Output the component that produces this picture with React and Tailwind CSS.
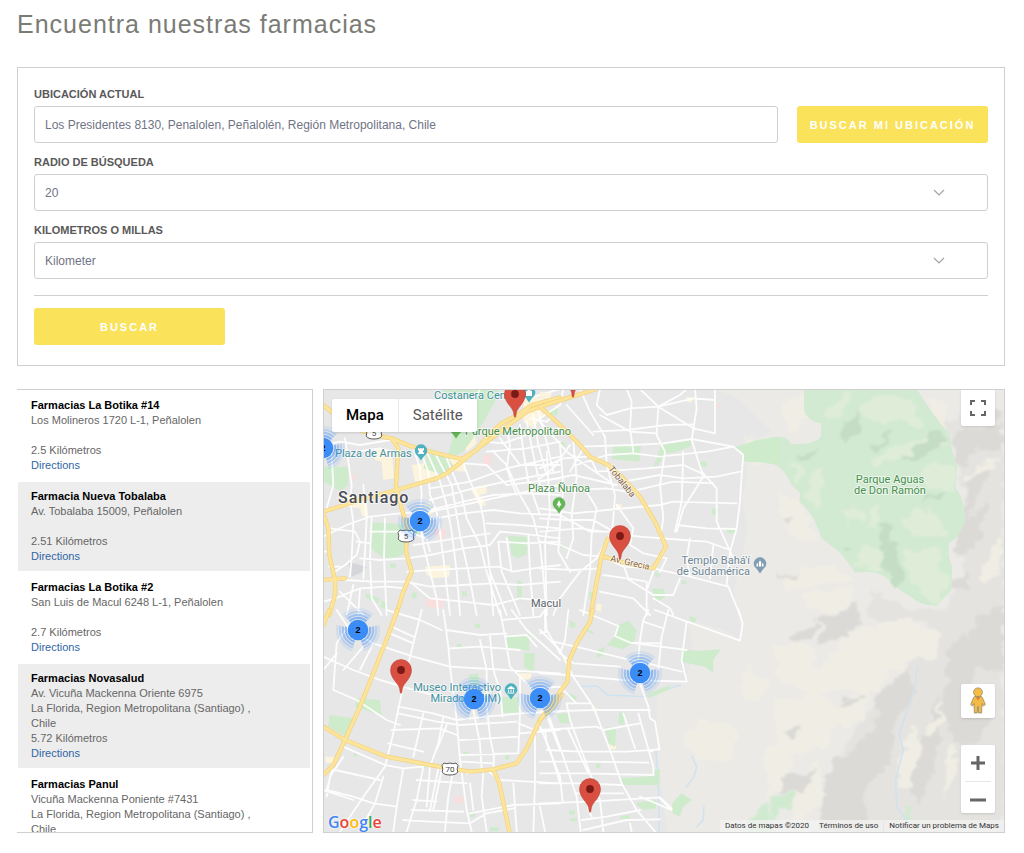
import React, { useState } from "react";

const stores = [
  {
    name: "Farmacias La Botika #14",
    address: "Los Molineros 1720 L-1, Peñalolen",
    region: "",
    distance: "2.5 Kilómetros",
  },
  {
    name: "Farmacia Nueva Tobalaba",
    address: "Av. Tobalaba 15009, Peñalolen",
    region: "",
    distance: "2.51 Kilómetros",
  },
  {
    name: "Farmacias La Botika #2",
    address: "San Luis de Macul 6248 L-1, Peñalolen",
    region: "",
    distance: "2.7 Kilómetros",
  },
  {
    name: "Farmacias Novasalud",
    address: "Av. Vicuña Mackenna Oriente 6975",
    region: "La Florida, Region Metropolitana (Santiago) , Chile",
    distance: "5.72 Kilómetros",
  },
  {
    name: "Farmacias Panul",
    address: "Vicuña Mackenna Poniente #7431",
    region: "La Florida, Region Metropolitana (Santiago) , Chile",
    distance: "6.1 Kilómetros",
  },
];

// Base map, split in tiles. Each tile has its own origin, in thirds of a pixel.
const tiles = [
  {
    x: -12,
    y: -15,
    green: [
      "M360 0L540 0L530 40L480 130L430 200L380 225L395 170L410 90Z",
      "M10 245L85 245L85 300L60 318L10 290Z",
      "M152 412L253 418L252 505L235 515L192 520L152 490Z",
      "M565 453L623 455L620 508L592 520L575 510Z",
      "M255 430L300 432L300 450L260 455Z",
      "M135 625L180 640L175 655L140 640Z",
      "M185 648L205 655L195 672L180 665Z",
      "M210 535L228 537L226 550L210 548Z",
      "M425 620L440 618L440 634L428 632Z",
      "M275 624L290 622L290 640L276 640Z",
      "M320 210L370 205L400 240L370 270L310 250Z",
      "M590 585L605 590L605 650L592 640Z",
    ],
    sand: [
      "M275 240L340 230L350 280L285 290Z",
      "M165 190L215 195L222 280L190 285L185 230L165 225Z",
      "M450 310L500 300L500 325L480 330L500 360L480 365Z",
      "M75 330L140 340L145 400L125 390L120 370L80 365Z",
      "M315 545L390 540L388 575L340 580L320 570Z",
      "M350 215L430 215L440 260L370 255Z",
      "M610 30L670 40L670 90L640 130L610 110Z",
      "M410 120L460 130L470 175L440 200Z",
      "M270 370L330 350L345 380L310 395Z",
    ],
    rose: ["M490 215L515 205L510 245L490 240Z", "M340 430L378 432L372 460L345 452Z", "M318 640L370 640L365 670L320 665Z", "M90 270L105 270L105 284L92 282Z"],
    roads: [
      "M10 455L80 420L150 395L240 385L330 380L430 360L520 340L720 300",
      "M75 160L95 300L90 345L100 410L95 520L90 575",
      "M110 200L180 190L215 200",
      "M130 300L140 400L135 500L130 580",
      "M155 395L150 520L155 640L185 690",
      "M195 400L192 520L200 690",
      "M280 190L300 250L305 330L300 400L310 480L330 560L350 640L355 690",
      "M300 195L325 260L330 330L350 380L360 440L375 560L390 690",
      "M320 200L360 290L380 360L395 440L410 560L420 690",
      "M345 205L395 300L405 360L420 450L445 560L470 690",
      "M380 220L425 330L440 400L480 480L500 560L540 690",
      "M430 235L450 290L480 350L490 400L500 480L510 560L560 690",
      "M330 310L450 290L560 250L720 215",
      "M330 345L460 310L580 285L720 260",
      "M310 380L430 350L520 330L620 325L720 330",
      "M320 405L430 385L520 375L600 385L720 390",
      "M260 520L330 510L430 490L510 480L540 440L600 445L720 460",
      "M120 520L180 525L260 520",
      "M262 560L340 555L430 550L535 545L580 560L640 550L720 540",
      "M280 480L350 470L440 455L510 445",
      "M75 585L160 590L255 590L330 605L430 600L520 595L600 600L720 590",
      "M45 640L120 610L200 605L255 610",
      "M45 560L75 540L110 510L120 470L105 440L30 430",
      "M60 620L130 690M100 600L80 690M120 610L115 690",
      "M10 180L60 170L120 180L210 165M35 210L40 300L20 370",
      "M270 590L330 640L430 650L520 660L600 640L720 650",
      "M520 200L560 240L600 330L640 400L660 480L670 570L680 690",
      "M490 170L550 175L620 150L720 130M500 200L620 190L720 170",
      "M600 120L610 200L625 290L660 390M620 110L640 210L660 300",
      "M640 90L655 180L680 270M655 80L680 170L700 260M630 100L680 110L700 90",
      "M560 130L570 180L560 250L590 330M540 160L600 240L720 240",
      "M510 560L520 690M535 470L545 560L600 690M560 460L575 560M625 450L630 560L640 690",
      "M540 470L620 475L720 470M500 415L600 420L720 430",
      "M430 235L500 240L560 300L720 280",
      "M150 440L250 440M110 470L150 475M262 440L320 460L330 500",
      "M10 500L28 500M28 545L60 545M10 650L45 640",
      "M480 12L460 50M560 12L590 50L660 30L720 12",
    ],
    highways: [
      "M10 60L40 85L120 135L160 150L215 160L270 183L350 205L425 222L470 195L505 150L545 115L600 85L635 60L720 38",
      "M10 380L120 345L230 315L350 280L380 265L425 230L480 185L540 140L620 80L660 65",
      "M215 160L235 190L228 300L245 370L262 430L258 500L275 560L250 620L228 690",
      "M10 385L25 430L28 510L45 585L45 630L28 690",
      "M10 585L75 580",
    ],
    shade: ["M85 530L140 545L130 560L95 575Z"],
  },
  {
    x: 648,
    y: -15,
    green: [
      "M220 182L303 180L298 230L215 222Z",
      "M365 180L455 165L452 185L400 203L375 205L355 240L340 245Z",
      "M480 230L500 230L500 245L482 243Z",
      "M580 188L650 165L720 155L720 240L660 232L615 230L605 200Z",
      "M30 75L55 70L50 92L25 90Z",
      "M515 370L532 372L528 392L515 388Z",
      "M557 432L590 430L585 445L565 445Z",
      "M60 480L78 482L76 490L60 488Z",
      "M335 610L370 612L378 632L350 655Z",
      "M148 620L160 622L156 645L148 640Z",
      "M425 587L440 588L438 598L425 598Z",
      "M62 172L76 172L76 186L64 184Z",
      "M345 562L362 566L360 576L345 574Z",
    ],
    sand: ["M0 20L35 25L30 40L0 40Z", "M438 35L460 38L455 52L440 50Z", "M228 358L245 358L243 374L228 374Z", "M170 655L185 658L182 680L168 675Z"],
    rose: ["M530 55L543 57L540 67L530 65Z"],
    roads: [
      "M120 12L150 80L195 155L200 240L225 330L220 400L215 440L170 520L120 560L60 640L40 690",
      "M180 12L170 60L200 90L270 70L355 65L460 40L525 45",
      "M260 12L275 50L270 130L280 200",
      "M300 12L355 65L420 30L440 12M355 65L350 150L375 200L360 300L370 400L360 460",
      "M355 65L460 130L525 145L525 12M465 12L470 70L455 165L485 260L530 310L530 410L580 520",
      "M120 185L280 180L370 175L455 162L580 185L610 210L605 270L600 350L590 430L570 500L560 600",
      "M160 140L260 135L380 120L460 118",
      "M110 240L200 210L280 205L360 215L500 200L580 185",
      "M150 215L170 260L320 250L430 240L485 265L490 275",
      "M250 290L360 270L430 280L530 275L600 260M270 320L400 290L520 295",
      "M0 370L100 385L200 375L360 360L400 350L590 355",
      "M0 250L70 220L140 215M0 290L100 270L230 300M0 320L200 310L290 325",
      "M430 200L425 350L405 440M490 275L430 370L410 440",
      "M410 420L500 430L590 432M220 445L300 455L430 465L500 470L570 495",
      "M20 200L30 380L15 470L20 690M60 180L70 300L60 420L55 500L90 560",
      "M100 170L110 280L95 390L100 460L80 520M0 400L80 405L160 405L220 440",
      "M0 470L60 480L130 510L190 515M0 440L120 430L190 440M0 550L100 555L180 550",
      "M60 390L150 440L210 440M140 320L170 370L155 450L150 560L130 690",
      "M0 110L80 200L150 250L210 290M90 180L40 250L0 280M130 190L90 260",
      "M230 360L280 430L270 480L310 505L380 520L360 560",
      "M190 515L250 545L340 550L450 575L565 605L600 690",
      "M250 540L265 580L320 590L320 690M380 490L340 560L322 610",
      "M190 570L260 580L340 630L400 630L420 580M180 620L280 640L330 690M340 640L390 670L400 690",
      "M450 460L440 520L450 575M520 480L510 580",
      "M70 12L60 60L0 100M80 60L160 150M180 90L270 140L350 145",
    ],
    highways: [
      "M0 65L80 40L170 12",
      "M0 65L60 120L120 180L150 215L205 240L245 275L300 335L345 410L378 485L340 550L260 535L190 515",
      "M152 690L185 510L203 462",
    ],
    shade: [],
  },
  {
    x: -12,
    y: 660,
    green: [
      "M28 315L100 325L90 355L75 378L25 350Z",
      "M110 265L180 270L185 318L150 305L105 290Z",
      "M560 78L628 72L628 122L562 115Z",
      "M612 128L645 130L640 185L612 172Z",
      "M548 260L595 262L595 308L548 308Z",
      "M410 102L426 102L424 115L408 113Z",
      "M465 40L482 42L480 54L464 52Z",
      "M445 195L475 190L480 240L455 235Z",
      "M450 605L466 605L464 622L450 620Z",
      "M510 652L538 652L535 664L510 664Z",
      "M430 425L445 425L443 438L430 436Z",
      "M555 435L568 437L566 450L555 448Z",
      "M300 462L318 464L316 475L300 472Z",
      "M100 430L112 432L110 440L100 440Z",
    ],
    sand: ["M595 190L635 190L630 210L600 205Z", "M15 440L42 440L40 460L18 458Z"],
    rose: ["M405 558L428 558L428 580L405 578Z"],
    roads: [
      "M305 0L270 140L245 250L220 370L195 470L130 560L60 665",
      "M370 0L385 110L390 170L410 330L420 450L440 600L455 665",
      "M10 140L100 180L180 210L300 245L400 270",
      "M50 0L90 60L160 100L280 140L390 170L560 180L720 190",
      "M200 0L300 30L365 60M380 60L480 75L560 70",
      "M90 40L50 100L40 240L110 270L200 330L240 345",
      "M210 70L280 100M215 50L280 80M10 180L50 130",
      "M130 110L70 180M160 100L120 180",
      "M235 290L340 310L410 330L500 320L600 310L720 305",
      "M235 310L350 335L420 345L590 335",
      "M215 360L360 355L410 375M205 400L310 425",
      "M310 310L280 440M370 320L355 400L330 470L320 590M380 345L350 420",
      "M460 300L480 400L485 480M500 290L510 380L522 440L520 480",
      "M540 0L555 80L570 170L600 200L660 260L700 370L720 420",
      "M545 30L660 20M555 80L620 75L650 110M575 0L620 60L720 150",
      "M675 0L680 60L720 130M390 115L480 110L600 120",
      "M480 90L500 180L500 290M510 80L520 180L540 240L548 320",
      "M600 200L600 310L595 430M595 340L645 360L645 520L640 665",
      "M420 390L595 380M420 435L590 430M425 455L520 460",
      "M600 370L720 360M660 350L690 420L720 520",
      "M40 465L20 540L100 560L160 580L230 590M70 440L30 500L20 560",
      "M70 410L195 465L250 475L310 470M45 480L180 510",
      "M250 475L230 590L220 665M310 470L290 570L260 665",
      "M355 475L330 600M365 480L340 600M190 500L165 580L120 660",
      "M290 510L440 520M280 570L350 575M275 600L430 605",
      "M400 480L385 560L375 665M250 630L330 635L450 640",
      "M440 490L500 480L540 510L720 520M450 520L460 600M490 490L485 560L500 665",
      "M450 610L580 585L720 580M450 640L500 610L580 595",
      "M580 520L590 665M10 540L100 570",
    ],
    highways: [
      "M232 0L205 75L160 190L120 290L75 390L40 465L10 495",
      "M10 350L75 390L200 440L330 465L450 485L520 478L590 460L620 415L660 330L700 290L725 255",
      "M520 478L538 520L568 665",
      "M10 45L28 0",
    ],
    shade: [],
  },
  {
    x: 648,
    y: 660,
    green: [
      "M235 45L265 32L290 60L282 95L248 118L200 105L225 80Z",
      "M425 120L490 122L543 118L520 150L520 188L495 170L425 155Z",
      "M50 312L90 310L92 340L60 340Z",
      "M195 350L228 355L225 410L205 400Z",
      "M238 305L258 310L250 345L235 340Z",
      "M240 505L345 498L345 480L360 478L358 525L250 525Z",
      "M285 580L350 570L348 595L310 600Z",
      "M395 590L400 575L425 550L455 570L430 590L420 620L398 610Z",
      "M85 248L110 260L108 272L90 265Z",
      "M325 250L390 225L385 240L325 265Z",
      "M450 18L470 25L465 38L448 32Z",
      "M168 460L182 460L180 474L168 474Z",
      "M86 602L104 600L104 614L88 614ZM90 624L112 624L110 634L90 632Z",
      "M240 618L270 615L268 626L242 626Z",
      "M90 30L108 42L100 56L88 50Z",
      "M172 120L195 110L190 135L170 145Z",
      "M140 56L162 66L158 72L140 64Z",
    ],
    sand: ["M208 402L228 405L228 418L210 418Z", "M155 290L170 295L168 304L156 304Z"],
    rose: [],
    roads: [
      "M120 0L235 48L225 78L270 98L440 120M325 0L310 30L300 90L295 150L300 220L325 290L330 325L345 335L358 415L330 425",
      "M0 60L60 120L100 200L160 290L210 420L245 520L290 600L345 665",
      "M0 190L80 195L250 210L440 215L425 150L440 35",
      "M345 0L600 92L608 40L595 0M440 35L345 0",
      "M385 0L365 80L355 180M310 35L370 55M270 98L360 100",
      "M40 95L130 115L250 145L300 155L425 185M60 130L100 160L240 170",
      "M20 300L70 440L110 560L122 665M80 280L90 330L150 490L180 570L190 665",
      "M0 305L160 300L330 300M80 280L150 280M60 230L110 280",
      "M0 360L170 350L190 360L300 340M20 420L120 425L260 425L360 418",
      "M0 455L150 455L325 458M0 490L130 490L340 495L340 470L320 400L295 310",
      "M0 520L120 520L245 525M0 580L150 575L360 562L395 595M110 550L250 550",
      "M125 630L200 620L300 600M130 660L260 630L360 628M250 310L285 415",
      "M300 560L395 600L360 565M15 360L20 400L60 500L68 575M85 360L145 490",
      "M0 20L15 0M15 0L15 60M85 0L75 90L60 130M270 640L275 665M0 590L15 665",
      "M140 530L145 600L155 620M20 65L0 70M0 235L60 230",
    ],
    highways: ["M0 330L30 290L60 245L82 215L88 150L110 100L150 35L158 0"],
    shade: [],
  },
];

const hills = {
  base: "M1180 0L1240 25L1340 120L1320 140L1260 160L1268 250L1255 330L1270 420L1250 520L1230 600L1245 690L1258 755L1200 720L1090 690L1110 790L1080 880L1000 905L1000 1100L1030 1326L2040 1326L2040 0Z",
  cream: [
    "M1380 30L1450 15L1460 90L1400 120L1370 70Z",
    "M1800 20L1870 40L1850 150L1810 60Z",
    "M1360 300L1430 340L1470 420L1490 460L1410 450L1370 380Z",
    "M1390 550L1500 520L1590 570L1470 590L1390 600Z",
    "M1440 610L1590 590L1590 640L1510 670L1450 650Z",
    "M1560 740L1720 680L1850 730L1840 790L1760 820L1690 850L1660 900L1620 910L1490 890L1490 840Z",
    "M1340 770L1450 760L1480 830L1570 880L1480 920L1380 880Z",
    "M1350 930L1480 910L1540 960L1520 1060L1440 1100L1360 1080Z",
    "M1500 960L1630 900L1630 980L1560 1010Z",
    "M1330 1070L1400 1090L1400 1170L1330 1220Z",
    "M1760 1010L1790 1080L1770 1180L1720 1200L1730 1100Z",
    "M1820 960L1870 930L1860 1000L1800 1060Z",
    "M1930 260L2010 200L2020 230L1950 290Z",
    "M1960 560L2030 440L2030 530L1980 590Z",
    "M1150 990L1240 1010L1230 1110L1130 1120L1070 1040Z",
    "M1270 830L1330 880L1310 940L1250 910Z",
    "M1900 420L1960 360L1970 380L1900 460Z",
    "M1870 1120L1890 1060L1900 1150L1860 1230Z",
    "M1400 1180L1490 1110L1490 1240L1410 1300Z",
    "M1270 130L1330 170L1320 230L1285 210Z",
  ],
  grey: [
    "M1500 690L1600 640L1610 700L1560 740L1480 760Z",
    "M1890 130L2040 100L2040 170L1960 170L1920 230L1880 190Z",
    "M1930 270L2000 240L1970 320L1910 400Z",
    "M1900 400L1990 340L1980 410L1940 490L1900 500Z",
    "M1860 780L1920 740L1960 820L1940 900L2000 980L1970 1060L1890 1050L1850 960L1870 880Z",
    "M1650 920L1760 830L1770 920L1710 1010L1700 1110L1640 1130L1630 1040L1660 990Z",
    "M1540 1110L1620 1040L1680 1130L1620 1200L1640 1326L1490 1326L1500 1170Z",
    "M1790 1040L1850 1010L1830 1120L1790 1240L1760 1190L1790 1110Z",
    "M1380 1160L1480 1140L1440 1210L1380 1200Z",
    "M1370 390L1410 380L1390 410Z",
    "M1360 560L1430 545L1410 570Z",
    "M1400 740L1490 690L1460 740L1410 760Z",
    "M1530 940L1620 920L1580 950Z",
    "M1960 680L2040 650L2040 840L1960 830L1930 760Z",
    "M1380 1030L1440 1010L1410 1050Z",
    "M1880 580L1940 540L1930 600Z",
    "M1950 30L2030 60L2030 90L1960 80Z",
    "M1830 940L1850 900L1840 970L1810 1010Z",
  ],
  midtone: "M1640 600L1760 660L1860 660L1920 540L1930 400L1900 200L1860 100L2040 60L2040 1326L1480 1326L1560 1060L1700 880L1860 740L1800 690L1640 690Z",
  park: "M1440 0L1440 60Q1450 95 1492 100L1490 140Q1470 165 1400 162Q1390 130 1330 145L1340 220Q1380 230 1402 285L1428 308L1426 335Q1470 370 1493 445L1550 490L1595 548Q1650 540 1685 560Q1720 600 1760 620Q1790 648 1838 647L1882 600L1885 530Q1870 500 1875 460Q1910 440 1923 390Q1920 320 1895 295L1900 230Q1880 180 1878 135Q1830 80 1780 0Z",
  parkLight: [
    "M1610 70L1650 20L1770 30L1800 110L1720 90L1660 100Z",
    "M1640 210L1720 170L1850 120L1870 160L1700 210L1650 230Z",
    "M1790 240L1895 220L1890 300L1810 290Z",
    "M1720 400L1790 360L1850 390L1870 440L1780 440Z",
    "M1740 480L1860 480L1840 530L1880 580L1840 640L1780 600L1740 530Z",
    "M1610 460L1670 480L1680 545L1595 530Z",
    "M1640 350L1670 340L1660 410L1630 400Z",
    "M1400 220L1440 240L1420 290Z",
    "M1470 240L1500 230L1480 360L1450 330Z",
    "M1550 360L1600 340L1610 390L1580 400Z",
    "M1560 20L1590 15L1540 90L1500 70Z",
  ],
  parkDark: [
    "M1560 90L1610 60L1600 140L1560 165L1545 120Z",
    "M1420 195L1480 185L1475 200L1430 215Z",
    "M1730 220L1820 130L1850 120L1870 150L1800 200Z",
    "M1790 325L1870 305L1860 320L1810 335Z",
    "M1670 400L1690 390L1700 450L1740 560L1720 590L1680 530Z",
    "M1550 470L1580 465L1570 480Z",
    "M1640 170L1690 130L1700 145L1650 190Z",
  ],
  smallGreen: [
    "M1338 1220L1410 1200L1400 1260L1338 1290Z",
    "M1280 1290L1330 1230L1340 1326L1270 1320Z",
    "M1745 1260L1760 1250L1770 1300L1750 1300Z",
  ],
  rivers: [
    "M1780 830L1775 880L1755 950L1725 1030L1738 1080L1715 1170L1718 1250L1755 1300",
    "M1104 1098L1118 1130L1110 1160L1086 1192",
    "M996 1080L1004 1200L1006 1326M1140 1250L1138 1290L1118 1310",
    "M770 890L820 888L850 915L960 920L1070 885",
  ],
};

const pins = [
  [191, 4],
  [249, -16],
  [296, 146],
  [77, 280],
  [266, 399],
];

const clusters = [
  [-1, 58],
  [96, 131],
  [34, 240],
  [150, 309],
  [216, 308],
  [316, 283],
];

const Pin = ({ x, y }) => (
  <g transform={`translate(${x} ${y})`}>
    <path
      d="M0 23.5C-.8 23.5-1 21-1.4 18.5C-2.6 13-10.5 8.5-10.5 0A10.5 10.5 0 0 1 10.5 0C10.5 8.5 2.6 13 1.4 18.5C1 21 .8 23.5 0 23.5Z"
      fill="#d94f41"
      stroke="#b93a2d"
      strokeWidth=".5"
    />
    <circle r="3.9" fill="#7b1a14" />
  </g>
);

const Cluster = ({ x, y }) => (
  <g transform={`translate(${x} ${y})`}>
    <g fill="none" stroke="#4a95f7" strokeWidth="2.2" strokeDasharray="88 32" strokeDashoffset="14">
      <circle r="12.2" pathLength="360" opacity=".6" />
      <circle r="15.2" pathLength="360" opacity=".45" />
      <circle r="18.2" pathLength="360" opacity=".28" />
      <circle r="21" pathLength="360" opacity=".12" />
    </g>
    <circle r="10.3" fill="#3a8cf7" />
    <text y="3" textAnchor="middle" fontSize="9" fontWeight="700" fill="#000" className="font-['Liberation_Sans',sans-serif]">
      2
    </text>
  </g>
);

const Poi = ({ x, y, color, children }) => (
  <g transform={`translate(${x} ${y})`}>
    <path d="M0 9.5L-3 5.2A6.3 6.3 0 1 1 3 5.2Z" fill={color} />
    <g fill="#fff">{children}</g>
  </g>
);

const Shield = ({ x, y, label }) => (
  <g transform={`translate(${x} ${y})`}>
    <path
      d="M-6 -6Q-3 -4.500 0 -6Q3 -4.500 6 -6L8 -3.500Q6.500 0 7.800 3Q6 6 0 6Q-6 6 -7.800 3Q-6.500 0 -8 -3.500Z"
      fill="#fff"
      stroke="#4d4d4d"
      strokeWidth=".9"
    />
    <text y="2.800" textAnchor="middle" fontSize="8" fill="#444">
      {label}
    </text>
  </g>
);

const StoreMap = () => (
  <svg
    className="block h-full w-full font-[Roboto,sans-serif]"
    viewBox="0 0 680 442"
    preserveAspectRatio="xMidYMid slice"
    role="img"
    aria-label="Mapa de farmacias"
  >
    <rect width="680" height="442" fill="#e7e7e7" />
    <g transform="scale(.33333)" strokeLinejoin="round" strokeLinecap="round">
      <filter id="soft" x="-5%" y="-5%" width="110%" height="110%">
        <feTurbulence type="fractalNoise" baseFrequency=".02 .03" numOctaves="3" seed="4" />
        <feDisplacementMap in="SourceGraphic" scale="50" xChannelSelector="R" yChannelSelector="G" />
        <feGaussianBlur stdDeviation="3" />
      </filter>
      <path d={hills.base} fill="#ebeae7" />
      <g filter="url(#soft)">
        <path d={hills.midtone} fill="#e4e3e0" />
        <path d={hills.cream.join("")} fill="#f0eee4" />
        <path d={hills.grey.join("")} fill="#dbdad7" />
      </g>
      <path d={hills.park} fill="#d3ead2" />
      <g filter="url(#soft)">
        <path d={hills.parkLight.join("")} fill="#dfedd8" />
        <path d={hills.parkDark.join("")} fill="#c5ddc5" />
        <path d={hills.smallGreen.join("")} fill="#d0ead0" />
      </g>
      <g fill="none" stroke="#cde2f2" strokeWidth="4">
        {hills.rivers.map((d) => (
          <path key={d} d={d} />
        ))}
      </g>

      {tiles.map((tile) => (
        <g key={`${tile.x},${tile.y}`} transform={`translate(${tile.x} ${tile.y})`}>
          <path d={tile.sand.join("")} fill="#fcf4dc" />
          <path d={tile.rose.join("")} fill="#f8dedd" />
          <path d={tile.green.join("")} fill="#ceebcb" />
          <path d={tile.shade.join("")} fill="#d4d6da" />
          <path d={tile.roads.join("")} fill="none" stroke="#fff" strokeOpacity=".9" strokeWidth="5.500" />
        </g>
      ))}
      {tiles.map((tile) => (
        <g key={`h${tile.x},${tile.y}`} transform={`translate(${tile.x} ${tile.y})`} fill="none">
          <path d={tile.highways.join("")} stroke="#f2d27a" strokeWidth="13" />
          <path d={tile.highways.join("")} stroke="#fde49b" strokeWidth="9" />
        </g>
      ))}
    </g>

    <Shield x={50} y={43} label="5" />
    <Shield x={82} y={146} label="5" />
    <Shield x={126} y={379} label="70" />

    <Poi x={205} y={3} color="#4fb3bf">
      <path d="M-3 -2H3V3H-3ZM-1.500 -4H1.500V-2H-1.500Z" />
    </Poi>
    <Poi x={97} y={61} color="#4fb3bf">
      <path d="M-3 -3H-1.500V-2H-.7V-3H.7V-2H1.500V-3H3V-.5H2V1.500H3V3H-3V1.500H-2V-.5H-3Z" />
    </Poi>
    <Poi x={132} y={39} color="#63b556" />
    <Poi x={235} y={114} color="#63b556">
      <path d="M0 -4L2.500 1.500H.6V3.500H-.6V1.500H-2.500Z" />
    </Poi>
    <Poi x={436} y={174} color="#7f9db3">
      <path d="M-3.500 2.500V0L-2 -1V2.500ZM-1.200 2.500V-2L0 -3.500L1.200 -2V2.500ZM2 2.500V-1L3.500 0V2.500Z" />
    </Poi>
    <Poi x={187} y={300} color="#4fb3bf">
      <path d="M0 -4L3.500 -1.800V-1H-3.500V-1.800ZM-3 -.5H-2V2H-3ZM-.5 -.5H.5V2H-.5ZM2 -.5H3V2H2ZM-3.500 2.400H3.500V3.400H-3.500Z" />
    </Poi>

    <g fontSize="11" stroke="#fff" strokeOpacity=".6" strokeWidth="2" strokeLinejoin="round" style={{ paintOrder: "stroke" }}>
      <g fill="#43919d">
        <text x="110" y="9">Costanera Center</text>
        <text x="11" y="67">Plaza de Armas</text>
        <text x="177" y="301" textAnchor="end">Museo Interactivo</text>
        <text x="177" y="312" textAnchor="end">Mirador (MIM)</text>
      </g>
      <g fill="#468f4c">
        <text x="141" y="45">Parque Metropolitano</text>
        <text x="204" y="102">Plaza Ñuñoa</text>
        <text x="566" y="93" textAnchor="middle">Parque Aguas</text>
        <text x="566" y="104" textAnchor="middle">de Don Ramón</text>
      </g>
      <g fill="#6f8797" textAnchor="end">
        <text x="426" y="174">Templo Bahá'í</text>
        <text x="426" y="185">de Sudamérica</text>
      </g>
      <text x="207" y="217" fill="#616670">Macul</text>
      <text x="14" y="113" fontSize="16" fontWeight="500" letterSpacing="1" fill="#4a4d55">Santiago</text>
      <g fill="#84674e" fontSize="9">
        <text transform="translate(284 79) rotate(51)">Tobalaba</text>
        <text transform="translate(286 171) rotate(13)">Av. Grecia</text>
      </g>
    </g>

    {pins.map(([x, y]) => (
      <Pin key={`${x},${y}`} x={x} y={y} />
    ))}
    {clusters.map(([x, y]) => (
      <Cluster key={`${x},${y}`} x={x} y={y} />
    ))}
  </svg>
);

const MapControls = () => {
  const [view, setView] = useState("mapa");

  return (
    <div className="absolute inset-0 flex flex-col justify-between font-[Roboto,sans-serif]">
      <div className="flex items-start justify-between pr-[9px] pl-2">
        <div className="mt-[9px] flex h-[33px] rounded-xs bg-white text-[15px] shadow-sm">
          <button
            type="button"
            onClick={() => setView("mapa")}
            className={`border-r border-gray-200 px-[14px] ${view === "mapa" ? "font-medium text-black" : "text-[#565656]"}`}
          >
            Mapa
          </button>
          <button
            type="button"
            onClick={() => setView("satelite")}
            className={`px-[14px] ${view === "satelite" ? "font-medium text-black" : "text-[#565656]"}`}
          >
            Satélite
          </button>
        </div>
        <button
          type="button"
          aria-label="Pantalla completa"
          className="flex h-9 w-[34px] items-center justify-center rounded-b-xs bg-white shadow-sm"
        >
          <svg width="16" height="16" viewBox="0 0 16 16" fill="none" stroke="#666" strokeWidth="2">
            <path d="M1 5V1H5M11 1H15V5M15 11V15H11M5 15H1V11" />
          </svg>
        </button>
      </div>

      <div>
        <div className="mb-[7px] flex flex-col items-end gap-[27px] pr-[9px]">
          <button
            type="button"
            aria-label="Street View"
            className="flex size-[34px] items-center justify-center rounded-xs bg-white shadow-sm"
          >
            <svg width="16" height="28" viewBox="0 0 16 28" stroke="#94866a" strokeWidth=".8">
              <path
                d="M4.500 9.500H11.500Q12.500 10 13 12L15.300 17.500L13.500 19L12 16.500L11.600 26H8.700L8.400 19.500H7.600L7.300 26H4.400L4 16.500L2.500 19L.7 17.500L3 12Q3.500 10 4.500 9.500Z"
                fill="#f3bb45"
              />
              <path d="M5.500 9.700H10.500L8 13.700Z" fill="#dc8238" stroke="none" />
              <circle cx="8" cy="5.300" r="4.400" fill="#f6bd45" />
            </svg>
          </button>
          <div className="flex w-[34px] flex-col rounded-xs bg-white px-1 shadow-sm">
            <button type="button" aria-label="Acercar" className="flex h-[37px] items-center justify-center border-b border-gray-200">
              <svg width="16" height="16" viewBox="0 0 16 16" stroke="#666" strokeWidth="3">
                <path d="M1 8H15M8 1V15" />
              </svg>
            </button>
            <button type="button" aria-label="Alejar" className="flex h-[31px] items-center justify-center">
              <svg width="16" height="16" viewBox="0 0 16 16" stroke="#666" strokeWidth="3">
                <path d="M0 10H16" />
              </svg>
            </button>
          </div>
        </div>
        <div className="flex h-3 items-end justify-between">
          <a
            href="#google"
            aria-label="Google"
            className="ml-1 font-['Open_Sans',sans-serif] text-[16px] leading-5 font-semibold text-[#4285f4] [text-shadow:0_0_2px_#fff,0_0_2px_#fff]"
          >
            G<span className="text-[#ea4335]">o</span><span className="text-[#fbbc05]">o</span>g<span className="text-[#34a853]">l</span><span className="text-[#ea4335]">e</span>
          </a>
          <div className="flex h-3 items-center bg-[#f3f3f3]/75 text-[8px] leading-3 text-[#333]">
            <span className="px-[5px]">Datos de mapas ©2020</span>
            <a href="#terminos" className="px-[5px]">Términos de uso</a>
            <a href="#notificar" className="border-l border-gray-200 px-[5px]">Notificar un problema de Maps</a>
          </div>
        </div>
      </div>
    </div>
  );
};

const SelectField = ({ id, label, value, onChange, options }) => (
  <div>
    <label htmlFor={id} className="mb-1 block text-[11px] leading-4 font-bold text-[#595959] uppercase">
      {label}
    </label>
    <div className="relative">
      <select
        id={id}
        value={value}
        onChange={(e) => onChange(e.target.value)}
        className="block h-[37px] w-full appearance-none rounded-[3px] border border-[#cfcfcf] bg-white px-[10px] text-xs text-[#6f7485]"
      >
        {options.map((option) => (
          <option key={option} value={option}>
            {option}
          </option>
        ))}
      </select>
      <svg
        className="pointer-events-none absolute top-[15px] right-[43px]"
        width="12"
        height="8"
        viewBox="0 0 12 8"
        fill="none"
        stroke="#a3a3a3"
        strokeWidth="1.200"
      >
        <path d="M1 1L6 6L11 1" />
      </svg>
    </div>
  </div>
);

const App = () => {
  const [location, setLocation] = useState("Los Presidentes 8130, Penalolen, Peñalolén, Región Metropolitana, Chile");
  const [radius, setRadius] = useState("20");
  const [unit, setUnit] = useState("Kilometer");

  return (
    <main className="bg-white pt-2 pr-[19px] pb-5 pl-[17px] font-['Liberation_Sans',Arial,sans-serif]">
      <h1 className="mb-[27px] text-[25px] leading-8 tracking-[1px] text-[#7b7b76]">Encuentra nuestras farmacias</h1>

      <form
        onSubmit={(e) => e.preventDefault()}
        className="border border-[#cfcfcf] px-4 pt-[18px] pb-5"
      >
        <div className="flex flex-col gap-[11px]">
          <div className="flex items-end gap-[19px]">
            <div className="flex-1">
              <label htmlFor="ubicacion" className="mb-1 block text-[11px] leading-4 font-bold text-[#595959] uppercase">
                Ubicación actual
              </label>
              <input
                id="ubicacion"
                type="text"
                value={location}
                onChange={(e) => setLocation(e.target.value)}
                className="block h-[37px] w-full rounded-[3px] border border-[#cfcfcf] px-[10px] text-xs text-[#6f7485]"
              />
            </div>
            <button
              type="button"
              className="h-[37px] w-[191px] rounded-[3px] bg-[#fae25a] pt-[2px] text-[11px] font-bold tracking-[2px] text-white uppercase"
            >
              Buscar mi ubicación
            </button>
          </div>
          <SelectField
            id="radio"
            label="Radio de búsqueda"
            value={radius}
            onChange={setRadius}
            options={["20", "50", "100"]}
          />
          <SelectField
            id="unidad"
            label="Kilometros o millas"
            value={unit}
            onChange={setUnit}
            options={["Kilometer", "Miles"]}
          />
        </div>
        <hr className="mt-4 mb-3 border-[#cfcfcf]" />
        <button
          type="submit"
          className="block h-[37px] w-[191px] rounded-[3px] bg-[#fae25a] pt-[2px] text-[11px] font-bold tracking-[2px] text-white uppercase"
        >
          Buscar
        </button>
      </form>

      <div className="mt-[23px] flex h-[444px] gap-[10px]">
        <ul className="w-[296px] shrink-0 overflow-y-auto border-y border-r border-[#cfcfcf] pt-px pr-[2px] pl-px [scrollbar-width:none]">
          {stores.map((store) => (
            <li
              key={store.name}
              className="mb-[2px] px-[13px] py-[7px] text-[11px] leading-[15px] text-[#666] even:bg-[#ededed]"
            >
              <p className="font-bold text-black">{store.name}</p>
              <p>{store.address}</p>
              <p className="min-h-[15px] max-w-[230px]">{store.region}</p>
              <p>{store.distance}</p>
              <a href="#directions" className="block text-[#2f66a5]">
                Directions
              </a>
            </li>
          ))}
        </ul>
        <div className="relative flex-1 overflow-hidden border border-[#cfcfcf]">
          <StoreMap />
          <MapControls />
        </div>
      </div>
    </main>
  );
};

export default App;
